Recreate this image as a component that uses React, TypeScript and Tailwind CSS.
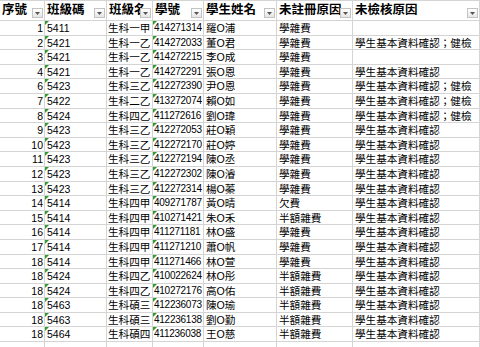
import React from 'react';

type Row = [string, string, string, string, string, string, string];

const rows: Row[] = [
  ['1', '5411', '生科一甲', '414271314', '羅O浦', '學雜費', ''],
  ['2', '5421', '生科一乙', '414272033', '董O君', '學雜費', '學生基本資料確認；健檢'],
  ['3', '5421', '生科一乙', '414272215', '李O成', '學雜費', ''],
  ['4', '5421', '生科一乙', '414272291', '張O恩', '學雜費', '學生基本資料確認'],
  ['6', '5423', '生科三乙', '412272390', '尹O恩', '學雜費', '學生基本資料確認；健檢'],
  ['7', '5422', '生科二乙', '413272074', '賴O如', '學雜費', '學生基本資料確認；健檢'],
  ['8', '5424', '生科四乙', '411272616', '劉O瑋', '學雜費', '學生基本資料確認；健檢'],
  ['9', '5423', '生科三乙', '412272053', '莊O穎', '學雜費', '學生基本資料確認'],
  ['10', '5423', '生科三乙', '412272170', '莊O婷', '學雜費', '學生基本資料確認'],
  ['11', '5423', '生科三乙', '412272194', '陳O丞', '學雜費', '學生基本資料確認'],
  ['12', '5423', '生科三乙', '412272302', '陳O濬', '學雜費', '學生基本資料確認'],
  ['13', '5423', '生科三乙', '412272314', '楊O蓁', '學雜費', '學生基本資料確認'],
  ['14', '5414', '生科四甲', '409271787', '黃O晴', '欠費', '學生基本資料確認'],
  ['15', '5414', '生科四甲', '410271421', '朱O禾', '半額雜費', '學生基本資料確認'],
  ['16', '5414', '生科四甲', '411271181', '林O盛', '學雜費', '學生基本資料確認'],
  ['17', '5414', '生科四甲', '411271210', '蕭O帆', '學雜費', '學生基本資料確認'],
  ['18', '5414', '生科四甲', '411271466', '林O萱', '學雜費', '學生基本資料確認'],
  ['18', '5424', '生科四乙', '410022624', '林O彤', '半額雜費', '學生基本資料確認'],
  ['18', '5424', '生科四乙', '410272176', '高O佑', '半額雜費', '學生基本資料確認'],
  ['18', '5463', '生科碩三', '412236073', '陳O瑜', '半額雜費', '學生基本資料確認'],
  ['18', '5463', '生科碩三', '412236138', '劉O勤', '半額雜費', '學生基本資料確認'],
  ['18', '5464', '生科碩四', '411236038', '王O慈', '半額雜費', '學生基本資料確認'],
];

const headers = ['序號', '班級碼', '班級名', '學號', '學生姓名', '未註冊原因', '未檢核原因'];

const gridCols = 'grid grid-cols-[45px_62px_46px_51px_73px_76px_1fr]';
const cell = 'relative border-r border-b border-[#d4d4d4] overflow-hidden whitespace-nowrap';

// Excel-style autofilter dropdown button
const FilterButton = () => (
  <div className="absolute right-[1px] bottom-[2px] w-[11px] h-[10px] border border-[#c3c3c3] bg-gradient-to-b from-white to-[#e6e6e6] flex items-center justify-center">
    <svg width="5" height="3" viewBox="0 0 5 3">
      <path d="M0 0h5L2.5 3z" fill="#555" />
    </svg>
  </div>
);

// green "number stored as text" marker
const Marker = () => (
  <span className="absolute top-0 left-0 w-0 h-0 border-t-[4px] border-t-[#2f9a2f] border-r-[4px] border-r-transparent" />
);

export default function App() {
  return (
    <div className="w-[480px] h-[347px] overflow-hidden bg-white text-black font-['Liberation_Sans','Noto_Sans_CJK_TC',sans-serif]">
      <div className={`${gridCols} h-[21px] border-t border-[#d4d4d4]`}>
        {headers.map((h) => (
          <div key={h} className={`${cell} pl-[2px] text-[12.5px] font-bold leading-[18px]`}>
            {h}
            <FilterButton />
          </div>
        ))}
      </div>
      {rows.map((r, i) => (
        <div key={i} className={`${gridCols} h-[14.6px] text-[10.6px] leading-[14px]`}>
          <div className={`${cell} text-right pr-[1px] text-[10.5px]`}>{r[0]}</div>
          <div className={`${cell} pl-[2px] text-[10.5px]`}>
            <Marker />
            {r[1]}
          </div>
          <div className={`${cell} pl-[1px]`}>{r[2]}</div>
          <div className={`${cell} pl-[1px] text-[10px] tracking-[-0.25px]`}>
            <Marker />
            {r[3]}
          </div>
          <div className={`${cell} pl-[2px]`}>{r[4]}</div>
          <div className={`${cell} pl-[2px]`}>{r[5]}</div>
          <div className={`${cell} pl-[2px]`}>{r[6]}</div>
        </div>
      ))}
      <div className={`${gridCols} h-[14px]`}>
        {headers.map((h) => (
          <div key={h} className={`${cell}`} />
        ))}
      </div>
    </div>
  );
}
